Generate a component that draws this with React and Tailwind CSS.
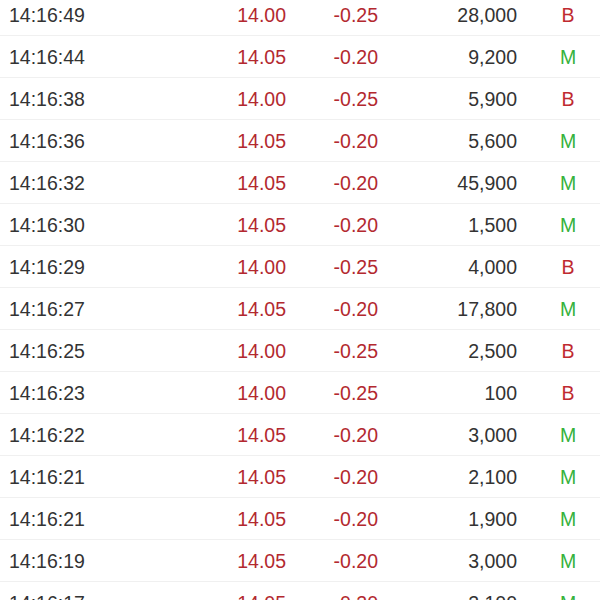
import React from "react";

const trades = [
  ["14:16:49", "14.00", "-0.25", "28,000", "B"],
  ["14:16:44", "14.05", "-0.20", "9,200", "M"],
  ["14:16:38", "14.00", "-0.25", "5,900", "B"],
  ["14:16:36", "14.05", "-0.20", "5,600", "M"],
  ["14:16:32", "14.05", "-0.20", "45,900", "M"],
  ["14:16:30", "14.05", "-0.20", "1,500", "M"],
  ["14:16:29", "14.00", "-0.25", "4,000", "B"],
  ["14:16:27", "14.05", "-0.20", "17,800", "M"],
  ["14:16:25", "14.00", "-0.25", "2,500", "B"],
  ["14:16:23", "14.00", "-0.25", "100", "B"],
  ["14:16:22", "14.05", "-0.20", "3,000", "M"],
  ["14:16:21", "14.05", "-0.20", "2,100", "M"],
  ["14:16:21", "14.05", "-0.20", "1,900", "M"],
  ["14:16:19", "14.05", "-0.20", "3,000", "M"],
  ["14:16:17", "14.05", "-0.20", "2,100", "M"],
];

export default function App() {
  return (
    <div className="h-[600px] w-[600px] overflow-hidden bg-white font-['Liberation_Sans',Arial,sans-serif] text-[19.5px]">
      <div className="-mt-[6px]">
        {trades.map(([time, price, change, vol, side], i) => (
          <div key={i} className="flex h-[42px] items-center border-b border-[#f0f0f0] pt-[3px]">
            <span className="w-[229px] pl-[9px] text-[#333333]">{time}</span>
            <span className="w-[57px] text-right text-[#b3292f]">{price}</span>
            <span className="w-[92px] text-right text-[#b3292f]">{change}</span>
            <span className="w-[139px] text-right text-[#333333]">{vol}</span>
            <span
              className={`ml-[36px] w-[30px] text-center ${side === "B" ? "text-[#bf2a30]" : "text-[#35b23c]"}`}
            >
              {side}
            </span>
          </div>
        ))}
      </div>
    </div>
  );
}
